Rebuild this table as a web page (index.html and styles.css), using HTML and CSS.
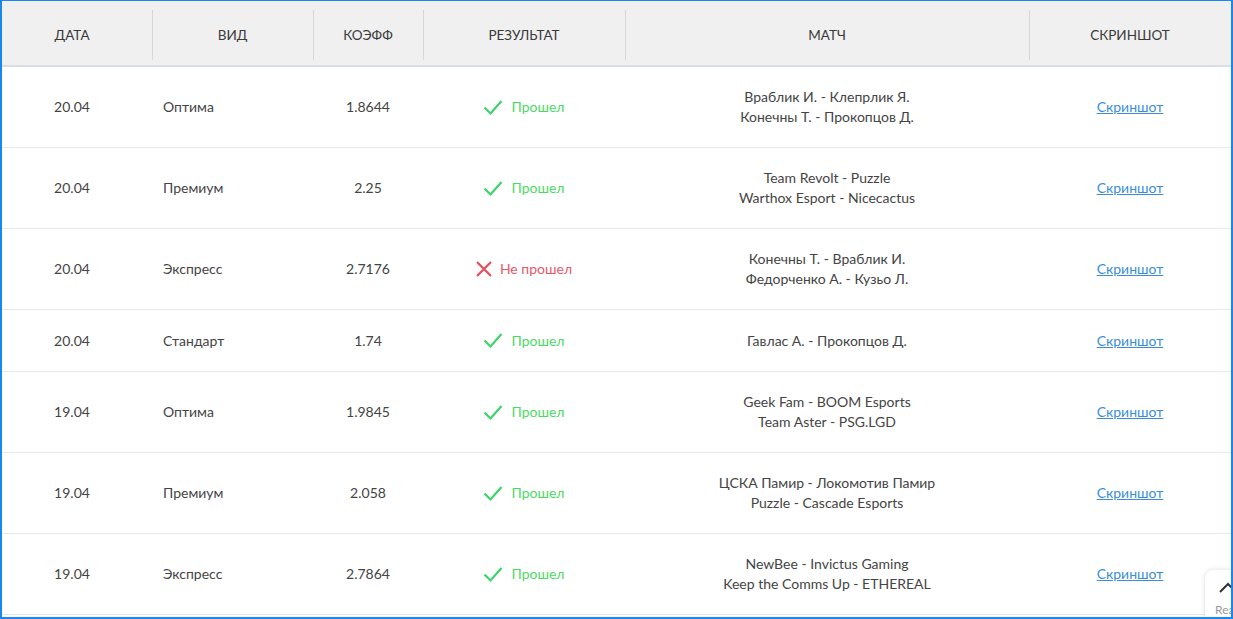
FILE: index.html
```html
<!DOCTYPE html>
<html lang="ru">
<head>
  <meta charset="UTF-8">
  <title>Результаты прогнозов</title>
  <link rel="stylesheet" href="styles.css">
</head>
<body>

  <div class="frame">
    <table class="tips">
      <thead>
        <tr>
          <th class="col-date">Дата</th>
          <th class="col-kind">Вид</th>
          <th class="col-coef">Коэфф</th>
          <th class="col-res">Результат</th>
          <th class="col-match">Матч</th>
          <th class="col-shot">Скриншот</th>
        </tr>
      </thead>
      <tbody>
        <tr>
          <td class="col-date">20.04</td>
          <td class="col-kind">Оптима</td>
          <td class="col-coef">1.8644</td>
          <td class="col-res"><span class="res win"><svg viewBox="0 0 20 16"><path d="M1.5 8 L7.5 14 L18.5 1.5"/></svg>Прошел</span></td>
          <td class="col-match">Враблик И. - Клепрлик Я.<br>Конечны Т. - Прокопцов Д.</td>
          <td class="col-shot"><a href="#">Скриншот</a></td>
        </tr>
        <tr>
          <td class="col-date">20.04</td>
          <td class="col-kind">Премиум</td>
          <td class="col-coef">2.25</td>
          <td class="col-res"><span class="res win"><svg viewBox="0 0 20 16"><path d="M1.5 8 L7.5 14 L18.5 1.5"/></svg>Прошел</span></td>
          <td class="col-match">Team Revolt - Puzzle<br>Warthox Esport - Nicecactus</td>
          <td class="col-shot"><a href="#">Скриншот</a></td>
        </tr>
        <tr>
          <td class="col-date">20.04</td>
          <td class="col-kind">Экспресс</td>
          <td class="col-coef">2.7176</td>
          <td class="col-res"><span class="res lose"><svg viewBox="0 0 16 16"><path d="M1 1 L15 15 M15 1 L1 15"/></svg>Не прошел</span></td>
          <td class="col-match">Конечны Т. - Враблик И.<br>Федорченко А. - Кузьо Л.</td>
          <td class="col-shot"><a href="#">Скриншот</a></td>
        </tr>
        <tr>
          <td class="col-date">20.04</td>
          <td class="col-kind">Стандарт</td>
          <td class="col-coef">1.74</td>
          <td class="col-res"><span class="res win"><svg viewBox="0 0 20 16"><path d="M1.5 8 L7.5 14 L18.5 1.5"/></svg>Прошел</span></td>
          <td class="col-match">Гавлас А. - Прокопцов Д.</td>
          <td class="col-shot"><a href="#">Скриншот</a></td>
        </tr>
        <tr>
          <td class="col-date">19.04</td>
          <td class="col-kind">Оптима</td>
          <td class="col-coef">1.9845</td>
          <td class="col-res"><span class="res win"><svg viewBox="0 0 20 16"><path d="M1.5 8 L7.5 14 L18.5 1.5"/></svg>Прошел</span></td>
          <td class="col-match">Geek Fam - BOOM Esports<br>Team Aster - PSG.LGD</td>
          <td class="col-shot"><a href="#">Скриншот</a></td>
        </tr>
        <tr>
          <td class="col-date">19.04</td>
          <td class="col-kind">Премиум</td>
          <td class="col-coef">2.058</td>
          <td class="col-res"><span class="res win"><svg viewBox="0 0 20 16"><path d="M1.5 8 L7.5 14 L18.5 1.5"/></svg>Прошел</span></td>
          <td class="col-match">ЦСКА Памир - Локомотив Памир<br>Puzzle - Cascade Esports</td>
          <td class="col-shot"><a href="#">Скриншот</a></td>
        </tr>
        <tr>
          <td class="col-date">19.04</td>
          <td class="col-kind">Экспресс</td>
          <td class="col-coef">2.7864</td>
          <td class="col-res"><span class="res win"><svg viewBox="0 0 20 16"><path d="M1.5 8 L7.5 14 L18.5 1.5"/></svg>Прошел</span></td>
          <td class="col-match">NewBee - Invictus Gaming<br>Keep the Comms Up - ETHEREAL</td>
          <td class="col-shot"><a href="#">Скриншот</a></td>
        </tr>
      </tbody>
    </table>

    <div class="to-top">
      <svg viewBox="0 0 20 12"><path d="M2 10 L10 2 L18 10"/></svg>
      <span>Ready</span>
    </div>
  </div>

</body>
</html>
```

FILE: styles.css
```css
html, body {
  margin: 0;
  height: 100%;
  overflow: hidden;
}

body {
  font-family: Lato, "Open Sans", sans-serif;
  font-size: 14px;
  color: #444;
  background: #fff;
}

.frame {
  position: relative;
  box-sizing: border-box;
  height: 619px;
  border: 1px solid #1a86f0;
  border-left-width: 2px;
  border-right-width: 2px;
  border-bottom-width: 2px;
  overflow: hidden;
}

.tips {
  width: 1229px;
  border-collapse: collapse;
  table-layout: fixed;
}

.tips thead tr {
  background: #f0f0f0;
  border-bottom: 2px solid #d9dee3;
}

.tips th,
.tips td {
  box-sizing: border-box;
}

.tips th {
  position: relative;
  height: 65px;
  padding: 3px 0 0;
  font-size: 13.5px;
  font-weight: normal;
  text-transform: uppercase;
  color: #3a3a3a;
  text-align: center;
}

.tips th + th::before {
  content: "";
  position: absolute;
  left: 0;
  top: 9px;
  bottom: 5px;
  border-left: 1px solid #d6d6d6;
}

.tips td {
  padding: 20px 0;
  line-height: 20px;
  text-align: center;
  border-bottom: 1px solid #e8e8e8;
}

.col-date { width: 150px; }
.col-kind { width: 161px; }
.col-coef { width: 110px; }
.col-res { width: 202px; }
.col-match { width: 404px; }
.col-shot { width: 202px; }

.tips th.col-date,
.tips td.col-date {
  padding-right: 10px;
}

.tips td.col-kind {
  text-align: left;
  padding-left: 11px;
}

.res {
  display: inline-flex;
  align-items: center;
  vertical-align: top;
  gap: 8px;
  height: 21px;
}

.res svg {
  fill: none;
  stroke-width: 2.2;
}

.win { color: #4cd964; }
.win svg { width: 20px; height: 17px; stroke: #3ed36a; }

.lose { color: #e8586a; }
.lose svg { width: 16px; height: 16px; stroke: #e84f5c; }

.col-shot a {
  color: #3a8ed8;
}

.to-top {
  position: absolute;
  left: 1203px;
  top: 569px;
  width: 60px;
  height: 60px;
  background: #fff;
  border-radius: 8px;
  box-shadow: 0 0 5px rgba(0, 0, 0, 0.15);
}

.to-top svg {
  display: block;
  width: 20px;
  height: 12px;
  margin: 12px 0 0 13px;
  fill: none;
  stroke: #333;
  stroke-width: 2;
}

.to-top span {
  display: block;
  margin: 8px 0 0 10px;
  font-size: 12px;
  color: #999;
}
```
